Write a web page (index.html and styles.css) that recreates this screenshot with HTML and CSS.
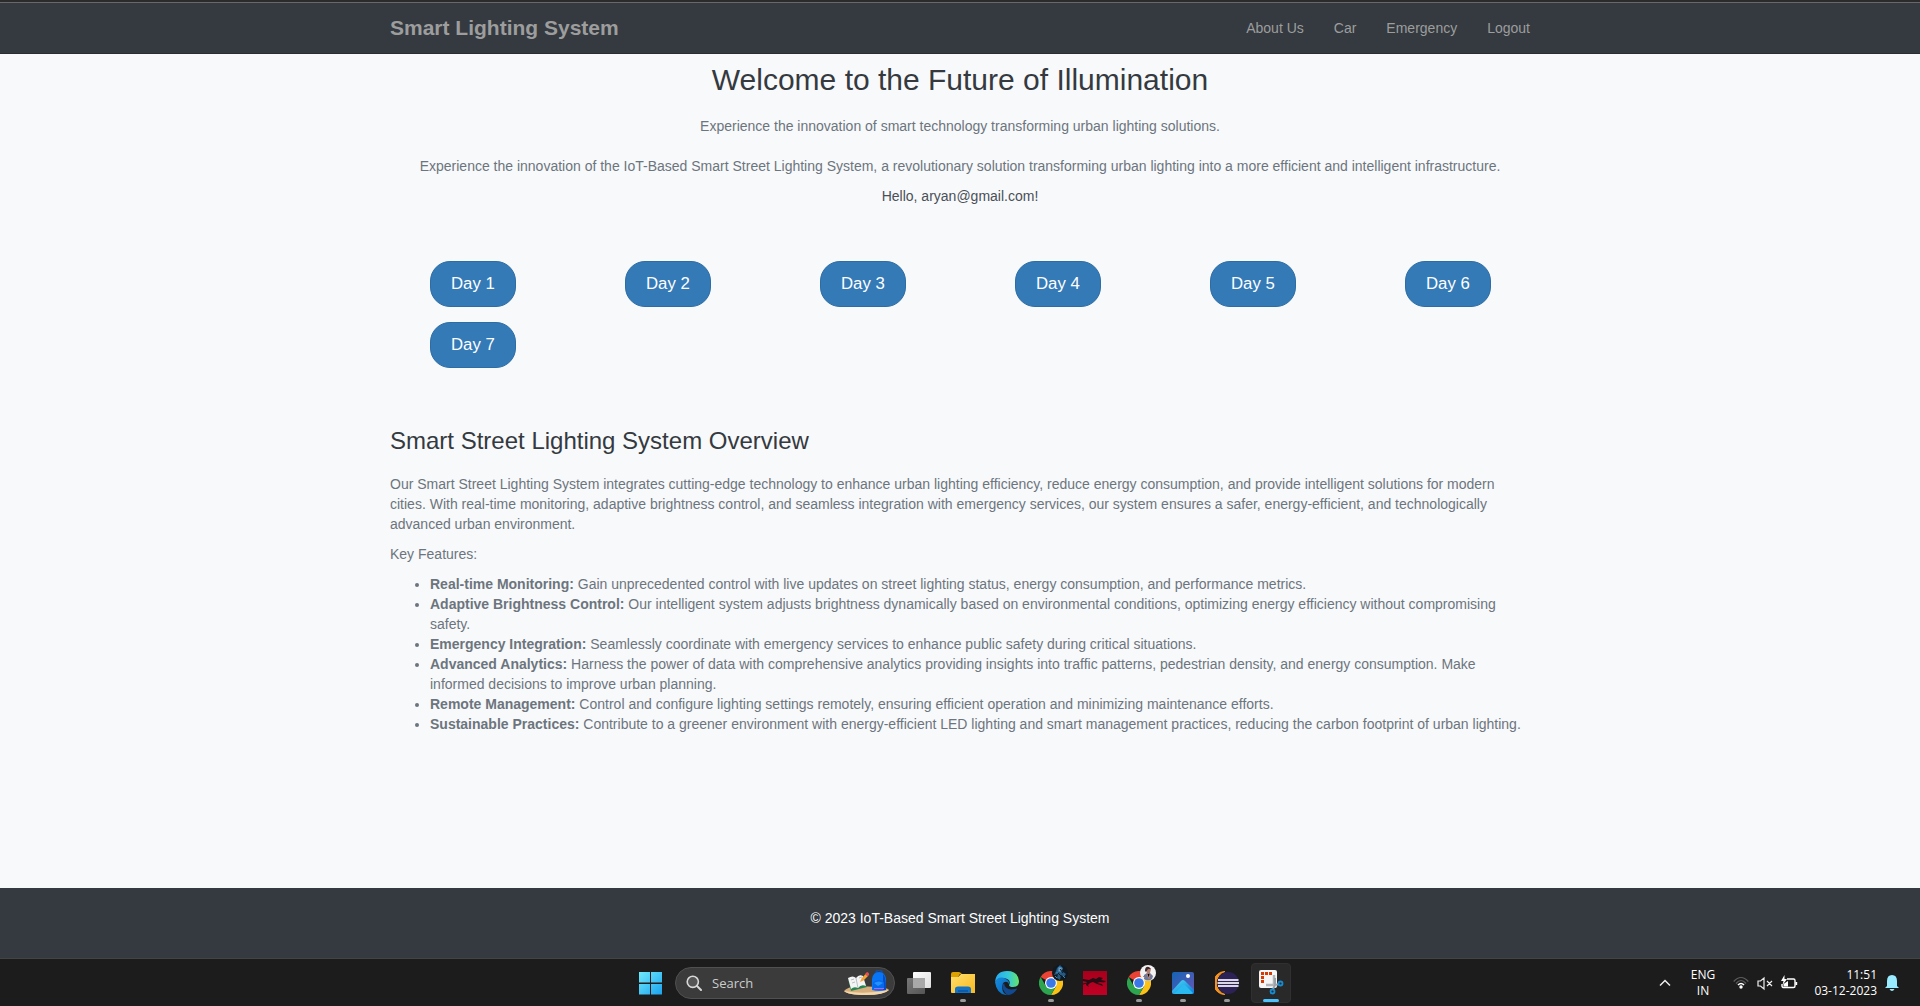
FILE: index.html
```html
<!DOCTYPE html>
<html lang="en">
<head>
<meta charset="utf-8">
<title>Smart Lighting System</title>
<link rel="stylesheet" href="styles.css">
</head>
<body>
<header class="navbar">
  <div class="container navbar-inner">
    <a class="brand">Smart Lighting System</a>
    <nav class="nav"><a>About Us</a><a>Car</a><a>Emergency</a><a>Logout</a></nav>
  </div>
</header>
<main class="container content">
  <section class="intro">
    <h2>Welcome to the Future of Illumination</h2>
    <p class="lead">Experience the innovation of smart technology transforming urban lighting solutions.</p>
    <p>Experience the innovation of the IoT-Based Smart Street Lighting System, a revolutionary solution transforming urban lighting into a more efficient and intelligent infrastructure.</p>
    <p class="greeting">Hello, aryan@gmail.com!</p>
  </section>
  <div class="days">
    <a class="btn">Day 1</a><a class="btn">Day 2</a><a class="btn">Day 3</a><a class="btn">Day 4</a><a class="btn">Day 5</a><a class="btn">Day 6</a><a class="btn">Day 7</a>
  </div>
  <section class="overview">
    <h3>Smart Street Lighting System Overview</h3>
    <p>Our Smart Street Lighting System integrates cutting-edge technology to enhance urban lighting efficiency, reduce energy consumption, and provide intelligent solutions for modern cities. With real-time monitoring, adaptive brightness control, and seamless integration with emergency services, our system ensures a safer, energy-efficient, and technologically advanced urban environment.</p>
    <p>Key Features:</p>
    <ul>
      <li><strong>Real-time Monitoring:</strong> Gain unprecedented control with live updates on street lighting status, energy consumption, and performance metrics.</li>
      <li><strong>Adaptive Brightness Control:</strong> Our intelligent system adjusts brightness dynamically based on environmental conditions, optimizing energy efficiency without compromising safety.</li>
      <li><strong>Emergency Integration:</strong> Seamlessly coordinate with emergency services to enhance public safety during critical situations.</li>
      <li><strong>Advanced Analytics:</strong> Harness the power of data with comprehensive analytics providing insights into traffic patterns, pedestrian density, and energy consumption. Make informed decisions to improve urban planning.</li>
      <li><strong>Remote Management:</strong> Control and configure lighting settings remotely, ensuring efficient operation and minimizing maintenance efforts.</li>
      <li><strong>Sustainable Practices:</strong> Contribute to a greener environment with energy-efficient LED lighting and smart management practices, reducing the carbon footprint of urban lighting.</li>
    </ul>
  </section>
</main>
<footer class="footer">© 2023 IoT-Based Smart Street Lighting System</footer>

<div class="taskbar">
  <div class="apps">
    <div class="app">
      <svg width="24" height="24" viewBox="0 0 24 24"><defs><linearGradient id="win" x1="0" y1="0" x2="1" y2="1"><stop offset="0" stop-color="#70e9fc"/><stop offset="1" stop-color="#1ba3ee"/></linearGradient></defs><path d="M0 1H11V11.500H0zM12 1H23V11.500H12zM0 13H11V23.500H0zM12 13H23V23.500H12z" fill="url(#win)"/></svg>
    </div>
    <div class="search">
      <svg width="16" height="16" viewBox="0 0 16 16" fill="none" stroke="#d8d8d8" stroke-linecap="round"><circle cx="6.800" cy="6.800" r="5.600" fill="#555" stroke-width="1.600"/><path d="M11 11l4 4" stroke-width="2"/></svg>
      <span>Search</span>
      <svg class="search-art" width="46" height="26" viewBox="0 0 46 26"><path d="M0 21Q3 17 14 16L34 17Q44 18 45 20Q40 25 22 25Q4 25 0 21z" fill="#d6ad7c"/><path d="M0 21Q20 25 45 20Q40 25 22 25Q4 25 0 21z" fill="#f4d8ab"/><path d="M4 9L7 21L23 17L21 13L8 16z" fill="#268552"/><path d="M4 8Q9 5 12 8Q15 4 19 6L22 16Q17 14 14 18Q10 16 7 19z" fill="#f4f4f4"/><path d="M12 8L14 18M7 10l3-1M8 13l3-1M15 8l3-1" stroke="#b8bfc5" fill="none"/><path d="M16 12L17.500 8.500L21.500 4L24 6L19.500 10.500z" fill="#f6a534"/><path d="M21 4L23 2Q25.500 2.500 25 5L23.500 6.500z" fill="#e45151"/><path d="M32 3Q32 0 35 0T38 3" fill="none" stroke="#164c9b" stroke-width="2"/><path d="M28 20V9Q29 2 35 2T42 9V20Q35 22 28 20z" fill="#0875f7"/><path d="M39 4Q42 6 42 20H39z" fill="#064bbf"/><path d="M29 12Q35 8 40 12V19Q35 20 29 19z" fill="#0868ea"/><path d="M30 13Q35 10 39 13L34 16z" fill="#2392ff"/><path d="M30 18.500H40" stroke="#c45af1"/></svg>
    </div>
    <div class="app">
      <svg width="24" height="24" viewBox="0 0 24 24"><defs><linearGradient id="pane" x2="1" y2="1"><stop stop-color="#fff"/><stop offset="1" stop-color="#dedede"/></linearGradient><linearGradient id="pane2" x2="1" y2="1"><stop stop-color="#777"/><stop offset="1" stop-color="#555"/></linearGradient></defs><rect x="6" y="1" width="18" height="16" rx="1" fill="url(#pane)"/><rect y="7" width="18" height="16" rx="1" fill="url(#pane2)"/><path d="M6 7H18V17H6z" fill="#a8a8a8"/></svg>
    </div>
    <div class="app open">
      <svg width="24" height="24" viewBox="0 0 24 24"><defs><linearGradient id="folder" y2="1" x2="1"><stop stop-color="#ffdf6d"/><stop offset="1" stop-color="#f8b91e"/></linearGradient></defs><path d="M0 3Q0 1 2 1H8Q9 1 11 3H9L7 6H0z" fill="#dda100"/><path d="M0 6H7L10 3H24V22H1Q0 22 0 21z" fill="url(#folder)"/><path d="M4 22V18Q4 15.500 7 15.500H17Q20 15.500 20 18V22z" fill="#1473c5"/><path d="M7 20H17" stroke="#07539d" stroke-width="1.300"/></svg>
    </div>
    <div class="app">
      <svg width="24" height="24" viewBox="0 0 24 24"><defs><linearGradient id="edge"><stop stop-color="#28a9ee"/><stop offset=".55" stop-color="#35c8da"/><stop offset="1" stop-color="#64e568"/></linearGradient><linearGradient id="edge2" x2="1" y2="1"><stop stop-color="#168ce1"/><stop offset="1" stop-color="#0a65b5"/></linearGradient></defs><path d="M0 11Q1 0 12 0Q23 0 24 10Q24 16 18 16Q13 16 14.500 13Q16 8 8 7Q2 7 0 11z" fill="url(#edge)"/><path d="M0 11Q4 4 11 8Q15 10 14 13Q12 9 8 12Q5 23 14 24Q2 25 0 11z" fill="url(#edge2)"/><path d="M9 12Q6 15 9 20Q11 24 14 24Q19 23 22 18Q22 17 20 18Q10 20 9 12z" fill="#114a91"/></svg>
    </div>
    <div class="app open">
      <svg width="24" height="24" viewBox="0 0 24 24"><g id="chrome"><path d="M12 12L1.600 6A12 12 0 0 1 22.400 6H12z" fill="#ea4335"/><path d="M12 12V6H22.400A12 12 0 0 1 12 24L17.200 15z" fill="#fbc116"/><path d="M12 12L17.200 15L12 24A12 12 0 0 1 1.600 6L6.800 15z" fill="#2da44e"/><circle cx="12" cy="12" r="6" fill="#fff"/><circle cx="12" cy="12" r="4.800" fill="#3b78e7"/></g></svg>
      <svg class="profile" width="16" height="16" viewBox="0 0 16 16"><circle cx="8" cy="8" r="8" fill="#101822"/><path d="M5 3L8 0L11 3L10 6L14 9L12 12L9 10L8 15L5 13L6 9L2 10L4 6z" fill="#255b82"/><path d="M7 2L10 3L9 7L6 6zM4 8L6 7M11 11L13 13M3 11L5 13" fill="#889ba7" stroke="#3586ba"/><path d="M6 8L9 11M8 4L11 8" stroke="#101822"/></svg>
    </div>
    <div class="app">
      <svg width="24" height="24" viewBox="0 0 24 24"><defs><linearGradient id="dragon" x2="0" y2="1"><stop stop-color="#a7001c"/><stop offset="1" stop-color="#c00025"/></linearGradient></defs><path d="M0 0H24V24H0z" fill="url(#dragon)"/><path d="M0 8L6 9L10 7L13 8L16 6L20 7L18 9L23 10L21 11.500L17 11L14 12L19 13L20 15L14 13L10 11L7 12L5 14L6 16L3 14L4 11L0 10z" fill="#260d14"/><path d="M0 13L4 12" stroke="#260d14"/></svg>
    </div>
    <div class="app open">
      <svg width="24" height="24" viewBox="0 0 24 24"><use href="#chrome"/></svg>
      <svg class="profile" width="16" height="16" viewBox="0 0 16 16"><circle cx="8" cy="8" r="8" fill="#f2f2f3"/><path d="M4 14L4 10L7 8H10L13 11L12 14Q8 17 4 14z" fill="#6d789b"/><path d="M6 4Q8 1 11 4L10 8L7 9z" fill="#b57f6b"/><path d="M5 6Q5 1 9 2L11 4L8 4L6 7z" fill="#3d2931"/><path d="M7 9L9 14L10 9M3 11L5 13" stroke="#b98575"/></svg>
    </div>
    <div class="app open">
      <svg width="24" height="24" viewBox="0 0 24 24"><defs><linearGradient id="photo" x2="1" y2="1"><stop stop-color="#1264b6"/><stop offset="1" stop-color="#6c56b1"/></linearGradient><linearGradient id="hill" x2="1" y2="1"><stop stop-color="#4edcf7"/><stop offset="1" stop-color="#0879d7"/></linearGradient></defs><rect x="1" y="1" width="22" height="22" rx="2" fill="url(#photo)"/><path d="M1 20L10 10Q12 8 14 10L23 19V21Q23 23 21 23H3Q1 23 1 21z" fill="url(#hill)"/><path d="M3 23L12 14Q13 13 14 14L22 22Q21 23 20 23z" fill="#2bbaf0"/><circle cx="17" cy="5" r="2" fill="#fff"/></svg>
    </div>
    <div class="app open">
      <svg width="24" height="24" viewBox="0 0 24 24"><path d="M10 .5A12 12 0 0 0 10 23.500A11.500 11.500 0 0 1 10 .5z" fill="#f7941e" stroke="#f7941e"/><circle cx="13" cy="12" r="11" fill="#2c2255"/><path d="M3 9H23.500M2.500 12H24M3 15H23.500" stroke="#d9d7e3" stroke-width="1.800"/></svg>
    </div>
    <div class="app open active">
      <svg width="25" height="25" viewBox="0 0 25 25"><rect y="0" width="18" height="18" rx="2" fill="#f6f6f6"/><path d="M2 2H5V5H2zM6 2H9V5H6zM10 2H13V5H10zM2 6H5V9H2zM2 10H5V13H2z" fill="#d83b01"/><path d="M7 15H14Q15 15 15 13V5" fill="none" stroke="#b2b5b8" stroke-width="2.500"/><path d="M14 19L16 15L20 14M16 8V15" fill="none" stroke="#9ca3a8" stroke-width="2"/><circle cx="21.500" cy="13.500" r="2" fill="none" stroke="#168bd1" stroke-width="1.800"/><circle cx="13.500" cy="21.500" r="2" fill="none" stroke="#168bd1" stroke-width="1.800"/></svg>
    </div>
  </div>
  <div class="tray">
    <svg class="chevron" width="12" height="8" viewBox="0 0 12 8" fill="none" stroke="#eee" stroke-width="1.500"><path d="M1 6.500L6 1.500L11 6.500"/></svg>
    <div class="language">ENG<br>IN</div>
    <div class="status">
      <svg width="16" height="16" viewBox="0 0 16 16" fill="none"><path d="M.7 6.500Q8-1.500 15.300 6.500M3 8.500Q8 2.500 13 8.500" stroke="#5d5d5d" stroke-width="1.200"/><path d="M5 10Q8 7 11 10" stroke="#fff" stroke-width="1.600"/><circle cx="8" cy="12" r="1.700" fill="#fff"/></svg>
      <svg width="16" height="16" viewBox="0 0 16 16" fill="none" stroke="#eee" stroke-width="1.200"><path d="M1 6H3.500L7 3V14L3.500 11H1zM10 6L15 11M15 6L10 11"/></svg>
      <svg width="17" height="16" viewBox="0 0 17 16"><path d="M6 4H12.500Q14 4 14 5.500V11Q14 12.500 12.500 12.500H3Q1 12.500 1 11V9M15.500 7V10" fill="none" stroke="#fff" stroke-width="1.400"/><path d="M2.500 11.500V9L7 6V11.500zM3.500 0L0 6H2.500L1.500 10L6 4H3.500z" fill="#fff"/></svg>
    </div>
    <div class="clock">11:51<br>03-12-2023</div>
    <svg class="bell" width="14" height="16" viewBox="0 0 14 16" fill="#99ebff"><path d="M2 11V6Q2 0 7 0T12 6V11L14 13H0zM4.500 14H9.500Q8.500 16 7 16T4.500 14z"/></svg>
  </div>
</div>
</body>
</html>
```
FILE: styles.css
```css
* { box-sizing: border-box; }

body {
  margin: 0;
  height: 1006px;
  display: flex;
  flex-direction: column;
  overflow: hidden;
  background: #f8f9fb;
  color: #6c757d;
  font: 14px/20px "Liberation Sans", Arial, sans-serif;
}

.container { width: 1170px; margin: 0 auto; padding: 0 15px; }

.navbar {
  height: 54px;
  flex: none;
  padding-top: 3px;
  background: linear-gradient(#2b2b2b 0 2px, #686868 2px 3px, #343a40 3px 53px, #292e33 53px);
  color: #9d9d9d;
}
.navbar-inner { display: flex; justify-content: space-between; align-items: center; height: 50px; }
.brand { font-size: 21px; font-weight: bold; }
.nav { display: flex; gap: 30px; }

.content { flex: 1; }
.intro { text-align: center; }
h2, h3 { margin: 0; color: #343a40; font-weight: normal; line-height: 1.1; }
h2 { padding-top: 9px; font-size: 30px; }
h3 { font-size: 24px; }
p { margin: 0 0 10px; }
.intro .lead { margin: 20px 0; }
.intro .greeting { margin: 0; color: #495057; }

.days {
  display: grid;
  grid-template-columns: repeat(6, 195px);
  gap: 15px 0;
  justify-items: start;
  padding: 55px 0 0 40px;
}
.btn {
  height: 46px;
  padding: 10px 20px;
  border: 1px solid #2e6da4;
  border-radius: 20px;
  background: #337ab7;
  color: #fff;
  font-size: 16.8px;
  line-height: 24px;
}

.overview { padding-top: 60px; }
.overview h3 { height: 46px; }
ul { margin: 0; padding-left: 40px; }

.footer {
  flex: none;
  height: 70px;
  padding-top: 20px;
  background: #343a40;
  color: #fff;
  text-align: center;
}

.taskbar {
  flex: none;
  display: flex;
  justify-content: space-between;
  align-items: center;
  height: 48px;
  padding: 0 21px 0 631px;
  border-top: 1px solid #444;
  background: #1c1c1c;
  color: #fff;
  font: 12px/16px "Open Sans", "Noto Sans", sans-serif;
}
.apps { display: flex; gap: 4px; }
.app {
  position: relative;
  display: flex;
  justify-content: center;
  align-items: center;
  width: 40px;
  height: 40px;
  border-radius: 4px;
}
.open::after {
  content: "";
  position: absolute;
  bottom: 1px;
  width: 6px;
  height: 3px;
  border-radius: 2px;
  background: #9a9a9a;
}
.active { background: #292929; border: 1px solid #303030; }
.active::after { bottom: 0; width: 16px; background: #4cc2ff; }
.profile { position: absolute; left: 21px; top: 2px; }
.search {
  display: flex;
  align-items: center;
  gap: 10px;
  align-self: center;
  width: 220px;
  height: 32px;
  padding: 0 4px 0 10px;
  border: 1px solid #505050;
  border-radius: 16px;
  background: #3b3b3b;
  color: #ccc;
  font-size: 13px;
}
.search-art { margin-left: auto; }

.tray { display: flex; align-items: center; }
.language { width: 26px; margin-left: 19px; text-align: center; }
.status { display: flex; gap: 8px; margin-left: 17px; }
.clock { width: 64px; margin-left: 15px; text-align: right; white-space: nowrap; }
.bell { margin-left: 8px; }
```
